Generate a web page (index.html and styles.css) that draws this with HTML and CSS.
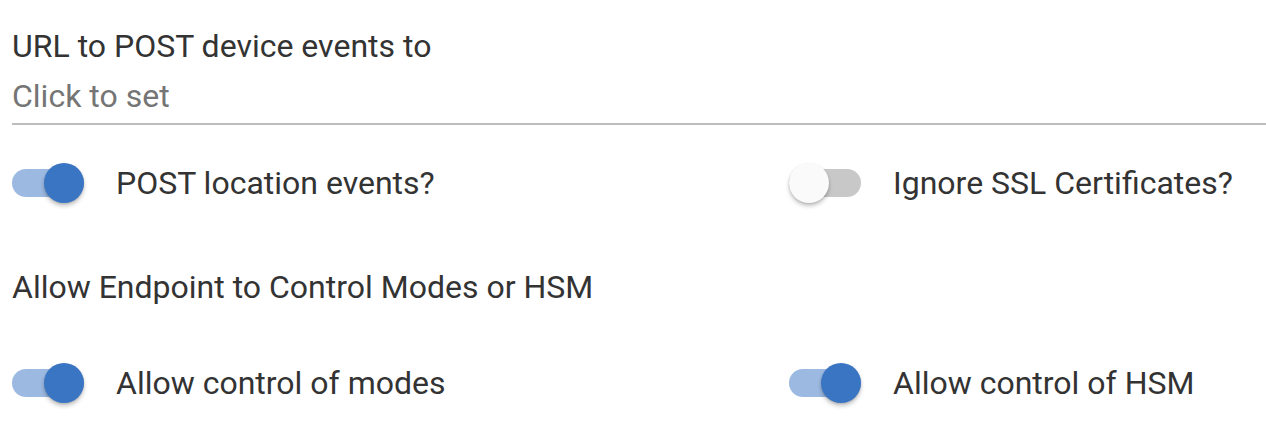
FILE: index.html
```html
<!DOCTYPE html>
<html>
<head>
<meta charset="utf-8">
<link rel="stylesheet" href="styles.css">
</head>
<body>
<div class="page">
  <div class="field">
    <div class="label">URL to POST device events to</div>
    <div class="value">Click to set</div>
  </div>
  <div class="row first">
    <div class="item">
      <div class="track on"><div class="knob"></div></div>
      <span class="text">POST location events?</span>
    </div>
    <div class="item">
      <div class="track off"><div class="knob"></div></div>
      <span class="text">Ignore SSL Certificates?</span>
    </div>
  </div>
  <div class="heading">Allow Endpoint to Control Modes or HSM</div>
  <div class="row second">
    <div class="item">
      <div class="track on"><div class="knob"></div></div>
      <span class="text">Allow control of modes</span>
    </div>
    <div class="item">
      <div class="track on"><div class="knob"></div></div>
      <span class="text">Allow control of HSM</span>
    </div>
  </div>
</div>
</body>
</html>
```
FILE: styles.css
```css
html, body {
  margin: 0;
  padding: 0;
  background: #ffffff;
}
.page {
  padding: 26px 0 0 12px;
  font-family: Roboto, "Liberation Sans", sans-serif;
  font-size: 32px;
  line-height: 40px;
  color: #333333;
}
.field {
  border-bottom: 2px solid #bdbdbd;
  padding-bottom: 7px;
}
.value {
  margin-top: 10px;
  color: #757575;
}
.row {
  display: grid;
  grid-template-columns: 777px 1fr;
  height: 56px;
  align-items: center;
}
.row.first {
  margin-top: 30px;
}
.heading {
  margin-top: 56px;
}
.row.second {
  margin-top: 48px;
}
.item {
  display: flex;
  align-items: center;
  gap: 32px;
}
.track {
  width: 72px;
  height: 28px;
  border-radius: 14px;
  display: flex;
  align-items: center;
  flex-shrink: 0;
}
.track.on {
  background: #9cb9e2;
  justify-content: flex-end;
}
.track.off {
  background: #c8c8c8;
  justify-content: flex-start;
}
.knob {
  width: 40px;
  height: 40px;
  border-radius: 50%;
  margin: -6px 0;
  flex-shrink: 0;
  box-shadow: 0 3px 4px rgba(0,0,0,0.22), 0 1px 2px rgba(0,0,0,0.12);
}
.track.on .knob {
  background: #3a75c4;
}
.track.off .knob {
  background: #fafafa;
}
```
